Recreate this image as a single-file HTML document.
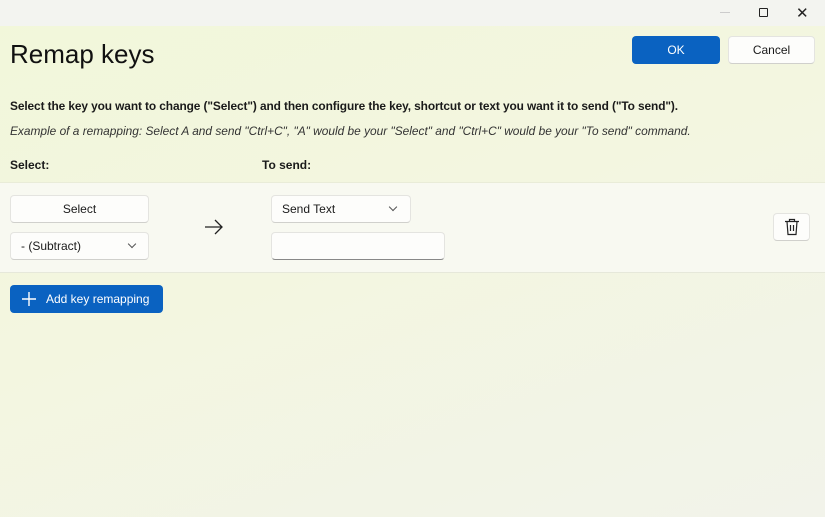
<!DOCTYPE html>
<html><head><style>
*{margin:0;padding:0;box-sizing:border-box}
body{width:825px;height:517px;overflow:hidden;font-family:"Liberation Sans",sans-serif;color:#1a1a1a;position:relative;
background:linear-gradient(160deg,#f2f7da 0%,#f3f6e0 45%,#f2f3ea 100%);}
.tb{position:absolute;left:0;top:0;width:825px;height:26px;background:#f3f4f0}
.abs{position:absolute}
.btn{position:absolute;background:#fdfdfb;border:1px solid #e4e4e0;border-bottom-color:#d0d0cc;border-radius:4px;font-size:12px;display:flex;align-items:center}
.chev{position:absolute;width:6px;height:6px;border-right:1px solid #555;border-bottom:1px solid #555;transform:rotate(45deg)}
</style></head><body>
<div class="tb"></div>
<div class="abs" style="left:720px;top:12px;width:10px;height:1px;background:#ccc"></div>
<div class="abs" style="left:759px;top:8px;width:9px;height:9px;border:1px solid #222;border-radius:1px"></div>
<div class="abs" style="left:796px;top:4px;font-size:15px;color:#222">✕</div>
<div class="abs" style="left:10px;top:39px;font-size:26px;color:#111">Remap keys</div>
<div class="abs" style="left:632px;top:36px;width:88px;height:28px;background:#0a62c1;border-radius:4px;color:#fff;font-size:12px;display:flex;align-items:center;justify-content:center">OK</div>
<div class="btn" style="left:728px;top:36px;width:87px;height:28px;justify-content:center">Cancel</div>
<div class="abs" style="left:10px;top:99px;font-size:11.9px;font-weight:bold;letter-spacing:-0.1px">Select the key you want to change ("Select") and then configure the key, shortcut or text you want it to send ("To send").</div>
<div class="abs" style="left:10px;top:124px;font-size:11.9px;font-style:italic;color:#333">Example of a remapping: Select A and send "Ctrl+C", "A" would be your "Select" and "Ctrl+C" would be your "To send" command.</div>
<div class="abs" style="left:10px;top:158px;font-size:12px;font-weight:bold">Select:</div>
<div class="abs" style="left:262px;top:158px;font-size:12px;font-weight:bold">To send:</div>
<div class="abs" style="left:0;top:182px;width:825px;height:91px;background:#f8f9f1;border-top:1px solid #e9ecd8;border-bottom:1px solid #e6e8da"></div>
<div class="btn" style="left:10px;top:195px;width:139px;height:28px;justify-content:center">Select</div>
<div class="btn" style="left:10px;top:232px;width:139px;height:28px;padding-left:10px">- (Subtract)<span class="chev" style="left:118px;top:8px"></span></div>
<svg class="abs" style="left:204px;top:219px" width="20" height="16" viewBox="0 0 20 16"><path d="M1 8H18M11 1L18 8L11 15" fill="none" stroke="#222" stroke-width="1.3"/></svg>
<div class="btn" style="left:271px;top:195px;width:140px;height:28px;padding-left:10px">Send Text<span class="chev" style="left:118px;top:8px"></span></div>
<div class="btn" style="left:271px;top:232px;width:174px;height:28px;border-bottom:1px solid #888"></div>
<div class="btn" style="left:773px;top:213px;width:37px;height:28px;justify-content:center">
<svg width="16" height="18" viewBox="0 0 16 18"><path d="M1 3.5H15M5.5 3.5V1.5H10.5V3.5M3 3.5L4 16.5H12L13 3.5M6.5 7V13M9.5 7V13" fill="none" stroke="#222" stroke-width="1.2"/></svg></div>
<div class="abs" style="left:10px;top:285px;width:153px;height:28px;background:#0a62c1;border-radius:4px;color:#fff;font-size:12px;display:flex;align-items:center">
<svg style="margin-left:12px;margin-right:10px" width="14" height="14" viewBox="0 0 14 14"><path d="M7 0V14M0 7H14" stroke="#fff" stroke-width="1.4"/></svg>Add key remapping</div>
</body></html>
